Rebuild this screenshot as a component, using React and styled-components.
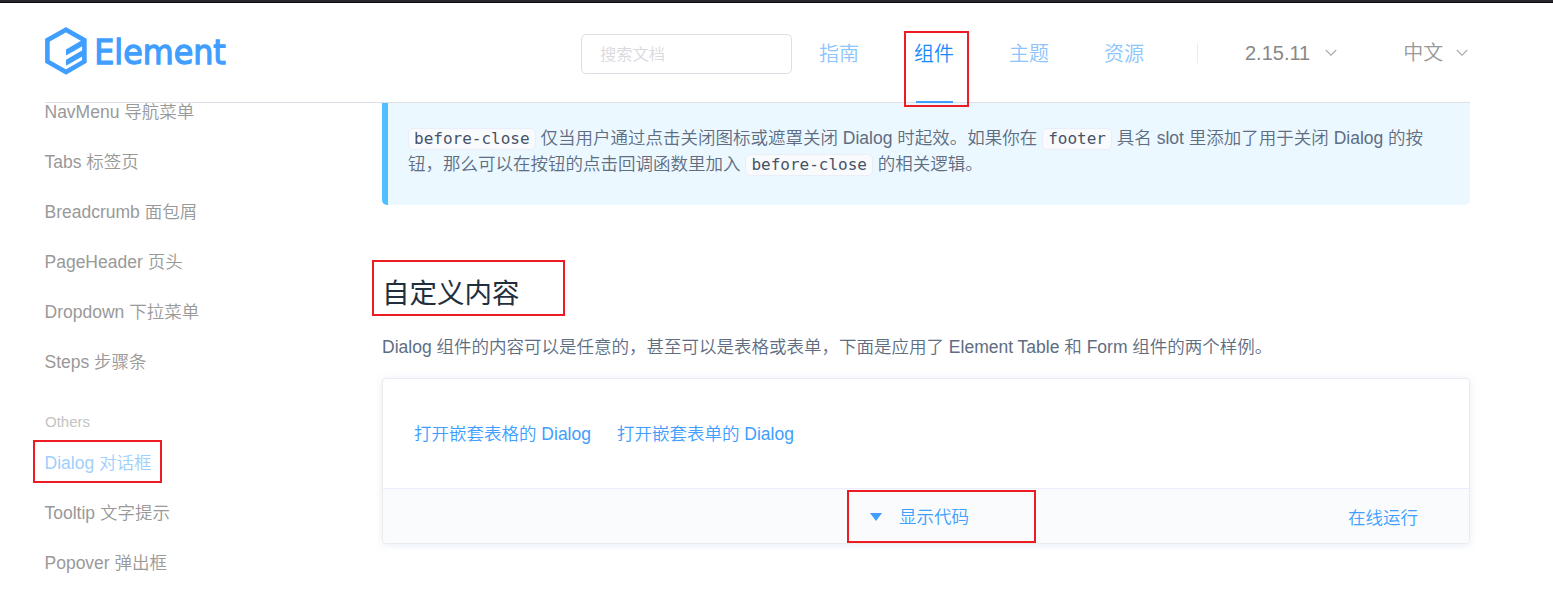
import React from "react";
import styled, { createGlobalStyle } from "styled-components";

const Global = createGlobalStyle`
  * { box-sizing: border-box; }
  html, body { margin: 0; background: #fff; overflow: hidden; }
  body {
    font-family: "Liberation Sans", "Noto Sans CJK SC", sans-serif;
    font-size: 17.5px;
    font-weight: 350;
  }
  p, h3 { margin: 0; }
`;

const Page = styled.div`
  height: 590px;
  overflow: hidden;
  border-top: 2px solid #29272e;
  display: flex;
  flex-direction: column;
`;

const TopEdge = styled.div`
  height: 1px;
  flex: none;
  background: #0c0c0e;
`;

const Header = styled.header`
  height: 100px;
  flex: none;
  margin: 0 83px 0 45px;
  border-bottom: 1px solid #dcdfe6;
  display: flex;
  align-items: flex-start;
`;

const Logo = styled.svg`
  width: 190px;
  height: 54px;
  margin: 21px 0 0 -3px;
  display: block;
  overflow: visible;
`;

const Wordmark = styled.text`
  font-family: "DejaVu Sans", sans-serif;
  font-size: 33.5px;
  font-weight: 400;
  fill: #409eff;
  stroke: #409eff;
  stroke-width: 1.3px;
`;

const Search = styled.div`
  width: 211px;
  height: 40px;
  margin: 31px 0 0 349px;
  border: 1px solid #dcdfe6;
  border-radius: 5px;
  padding-left: 18px;
  font-size: 16.25px;
  line-height: 38px;
  color: #d8dade;
`;

const Nav = styled.nav`
  display: flex;
  margin-left: 27px;
  font-size: 20px;
  line-height: 102px;
`;

const NavLink = styled.a`
  position: relative;
  height: 100px;
  width: ${(p) => p.$w}px;
  color: ${(p) => (p.$active ? "#1989fa" : "#8cc4fd")};
  &::after {
    content: "";
    display: ${(p) => (p.$active ? "block" : "none")};
    position: absolute;
    left: 2px;
    bottom: 0;
    width: 37px;
    height: 2px;
    background: #409eff;
  }
`;

const Divider = styled.i`
  width: 1px;
  height: 20px;
  margin: 40px 47px 0 0;
  background: #ebebeb;
`;

const Picker = styled.span`
  display: flex;
  align-items: center;
  height: 100px;
  line-height: 100px;
  gap: ${(p) => p.$gap}px;
  margin-right: ${(p) => p.$after || 0}px;
  color: ${(p) => p.$color};
  white-space: nowrap;
`;

const Columns = styled.div`
  display: flex;
  flex: 1;
  min-height: 0;
  padding: 0 83px 0 45px;
`;

const Sidebar = styled.ul`
  width: 337px;
  flex: none;
  margin: -16px 0 0;
  padding: 0;
  list-style: none;
  clip-path: inset(16px 0 0 -2px);
`;

const Item = styled.li`
  height: 50px;
  line-height: 50px;
  text-indent: -0.5px;
  color: ${(p) => (p.$active ? "#a0cffd" : "#999")};
`;

const Group = styled.li`
  margin-top: 19px;
  height: 32px;
  line-height: 32px;
  font-size: 15px;
  color: #c3c3c3;
`;

const Main = styled.main`
  flex: 1;
  min-width: 0;
`;

const Tip = styled.section`
  height: 102px;
  padding: 22px 0 0 20px;
  border-left: 6px solid #50bfff;
  border-radius: 0 0 5px 5px;
  background: #ecf8ff;
  color: #5e6d82;
  line-height: 26px;
  white-space: nowrap;
`;

const Code = styled.code`
  display: inline-block;
  height: 22px;
  line-height: 20px;
  padding: 0 5px;
  border: 1px solid #eaeefb;
  border-radius: 5px;
  background: #f9fafc;
  color: #445368;
  font-family: "DejaVu Sans Mono", monospace;
  font-size: 16px;
  font-weight: 400;
`;

const Title = styled.h3`
  margin-top: 69px;
  height: 40px;
  line-height: 40px;
  font-size: 27.5px;
  font-weight: 400;
  color: #1f2f3d;
`;

const Text = styled.p`
  margin-top: 20px;
  height: 26px;
  line-height: 26px;
  color: #5e6d82;
  white-space: nowrap;
`;

const Demo = styled.section`
  height: 166px;
  margin-top: 18px;
  border: 1px solid #ebebeb;
  border-radius: 4px;
  box-shadow: 0 0 10px rgba(232, 237, 250, 0.6), 0 2px 5px rgba(232, 237, 250, 0.5);
  color: #409eff;
`;

const Source = styled.div`
  height: 109px;
  padding: 0 31px 2px;
  display: flex;
  align-items: center;
  gap: 26px;
`;

const Control = styled.div`
  height: 55px;
  border-top: 1px solid #eaeefb;
  border-radius: 0 0 4px 4px;
  background: #fafbfc;
  display: flex;
  align-items: center;
`;

const Toggle = styled.span`
  display: flex;
  align-items: center;
  gap: 17px;
  margin: 0 auto 2px 487px;
`;

const Caret = styled.svg`
  width: 12px;
  height: 8px;
  margin-top: 4px;
`;

const Run = styled.span`
  margin: 0 51px 0 0;
`;

const Mark = styled.div`
  position: absolute;
  left: ${(p) => p.$x}px;
  top: ${(p) => p.$y}px;
  width: ${(p) => p.$w}px;
  height: ${(p) => p.$h}px;
  border: 2px solid #ed1c24;
`;

const Chevron = () => (
  <svg width="12" height="8" viewBox="0 0 12 8" fill="none" stroke="#aaa" strokeWidth="1.1">
    <path d="M.8 1 6 6.2 11.2 1" />
  </svg>
);

const marks = [
  [904, 31, 65, 76],
  [372, 260, 193, 56],
  [33, 440, 129, 43],
  [847, 490, 189, 53],
];

const items = [
  "NavMenu 导航菜单",
  "Tabs 标签页",
  "Breadcrumb 面包屑",
  "PageHeader 页头",
  "Dropdown 下拉菜单",
  "Steps 步骤条",
];

export default function App() {
  return (
    <>
      <Global />
      <Page>
        <TopEdge />
        <Header>
          <Logo viewBox="0 0 190 54">
            <path d="M24 5.7 42.4 16.2V37.4L24 48 5.4 37.4V16.2Z" fill="none" stroke="#409eff" strokeWidth="4.6" />
            <path d="M24 25.5 42 15v6.2L24 31.5ZM24 35.8 42 25.3v6.2L24 41.8Z" fill="#409eff" />
            <Wordmark x="52.3" y="39.8" textLength="131.5" lengthAdjust="spacingAndGlyphs">Element</Wordmark>
          </Logo>
          <Search>搜索文档</Search>
          <Nav>
            <NavLink $w={95}>指南</NavLink>
            <NavLink $w={95} $active>组件</NavLink>
            <NavLink $w={95}>主题</NavLink>
            <NavLink $w={93}>资源</NavLink>
            <Divider />
            <Picker $color="#888" $gap={15} $after={66}>2.15.11<Chevron /></Picker>
            <Picker $color="#999" $gap={13}>中文<Chevron /></Picker>
          </Nav>
        </Header>
        <Columns>
          <Sidebar>
            {items.map((t) => <Item key={t}>{t}</Item>)}
            <Group>Others</Group>
            <Item $active>Dialog 对话框</Item>
            <Item>Tooltip 文字提示</Item>
            <Item>Popover 弹出框</Item>
          </Sidebar>
          <Main>
            <Tip>
              <p><Code>before-close</Code> 仅当用户通过点击关闭图标或遮罩关闭 Dialog 时起效。如果你在 <Code>footer</Code> 具名 slot 里添加了用于关闭 Dialog 的按</p>
              <p>钮，那么可以在按钮的点击回调函数里加入 <Code>before-close</Code> 的相关逻辑。</p>
            </Tip>
            <Title>自定义内容</Title>
            <Text>Dialog 组件的内容可以是任意的，甚至可以是表格或表单，下面是应用了 Element Table 和 Form 组件的两个样例。</Text>
            <Demo>
              <Source>
                <span>打开嵌套表格的 Dialog</span>
                <span>打开嵌套表单的 Dialog</span>
              </Source>
              <Control>
                <Toggle>
                  <Caret viewBox="0 0 12 8"><path d="M0 0H12L6 8Z" fill="#409eff" /></Caret>
                  显示代码
                </Toggle>
                <Run>在线运行</Run>
              </Control>
            </Demo>
          </Main>
        </Columns>
      </Page>
      {marks.map(([x, y, w, h]) => <Mark key={x} $x={x} $y={y} $w={w} $h={h} />)}
    </>
  );
}
